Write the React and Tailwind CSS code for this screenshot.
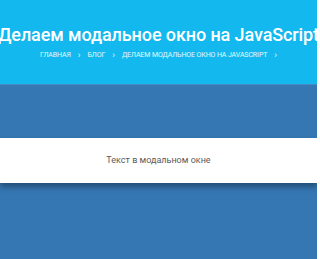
import React from "react";

const crumbs = ["Главная", "Блог", "Делаем модальное окно на JavaScript"];

const App = () => {
  return (
    <div className="w-[317px] h-[259px] overflow-hidden bg-[#3577b3] font-['Roboto',sans-serif]">
      <header className="h-[84px] bg-[#12b8ee] flex flex-col items-center pt-[24px]">
        <h1 className="whitespace-nowrap text-white font-medium text-[18px] leading-[22px] tracking-[-0.1px]">
          Делаем модальное окно на JavaScript
        </h1>
        <nav className="mt-[4px] flex items-center gap-[7px] text-[7px] leading-[10px] uppercase text-white/90">
          {crumbs.map((c) => (
            <React.Fragment key={c}>
              <span className="tracking-[-0.1px]">{c}</span>
              <span className="text-[9px] leading-[10px]">›</span>
            </React.Fragment>
          ))}
        </nav>
      </header>
      <div className="h-[54px] border-t border-[#4a8ac2]"></div>
      <div className="h-[45px] bg-white flex items-center justify-center shadow-[0_4px_6px_rgba(0,0,0,0.35)]">
        <p className="text-[9px] text-[#5a5a5a]">Текст в модальном окне</p>
      </div>
    </div>
  );
};

export default App;
